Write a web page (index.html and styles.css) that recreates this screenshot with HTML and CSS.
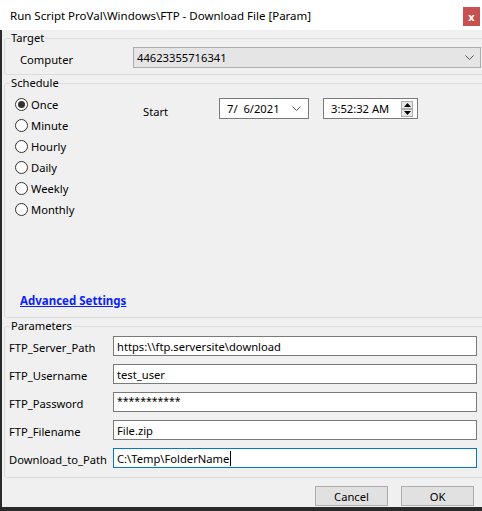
FILE: index.html
```html
<!DOCTYPE html>
<html>
<head>
<meta charset="utf-8">
<link rel="stylesheet" href="styles.css">
</head>
<body>
<div class="titlebar">
  <span class="title">Run Script ProVal\Windows\FTP - Download File [Param]</span>
  <span class="close">x</span>
</div>
<div class="window">
  <fieldset class="group group-target">
    <legend>Target</legend>
    <div class="row-computer">
      <span class="lbl-computer">Computer</span>
      <div class="combo">
        <span>44623355716341</span>
        <svg class="chev" width="9" height="5" viewBox="0 0 9 5"><path d="M0.5 0.5 L4.5 4.5 L8.5 0.5" fill="none" stroke="#555" stroke-width="1"/></svg>
      </div>
    </div>
  </fieldset>
  <fieldset class="group group-schedule">
    <legend>Schedule</legend>
    <div class="sched">
      <div class="radios">
        <div class="radio"><span class="circle checked"></span>Once</div>
        <div class="radio"><span class="circle"></span>Minute</div>
        <div class="radio"><span class="circle"></span>Hourly</div>
        <div class="radio"><span class="circle"></span>Daily</div>
        <div class="radio"><span class="circle"></span>Weekly</div>
        <div class="radio"><span class="circle"></span>Monthly</div>
      </div>
      <span class="start">Start</span>
      <div class="datebox">
        <span>7/&nbsp;&nbsp;6/2021</span>
        <svg class="chev" width="9" height="5" viewBox="0 0 9 5"><path d="M0.5 0.5 L4.5 4.5 L8.5 0.5" fill="none" stroke="#555" stroke-width="1"/></svg>
      </div>
      <div class="timebox">
        <span>3:52:32 AM</span>
        <div class="spin">
          <div class="spin-btn"><svg width="7" height="4" viewBox="0 0 7 4"><path d="M0 4 L3.5 0 L7 4 Z" fill="#000"/></svg></div>
          <div class="spin-btn"><svg width="7" height="4" viewBox="0 0 7 4"><path d="M0 0 L3.5 4 L7 0 Z" fill="#000"/></svg></div>
        </div>
      </div>
    </div>
    <a class="adv" href="#">Advanced Settings</a>
  </fieldset>
  <fieldset class="group group-params">
    <legend>Parameters</legend>
    <div class="params">
      <span class="plbl">FTP_Server_Path</span><div class="pin">https:\\ftp.serversite\download</div>
      <span class="plbl">FTP_Username</span><div class="pin">test_user</div>
      <span class="plbl">FTP_Password</span><div class="pin pw">***********</div>
      <span class="plbl">FTP_Filename</span><div class="pin">File.zip</div>
      <span class="plbl">Download_to_Path</span><div class="pin focus">C:\Temp\FolderName<span class="caret"></span></div>
    </div>
  </fieldset>
  <div class="buttons">
    <div class="btn">Cancel</div>
    <div class="btn">OK</div>
  </div>
</div>
</body>
</html>
```
FILE: styles.css
```css
* { box-sizing: border-box; }
html, body { margin: 0; padding: 0; }
body {
  width: 482px;
  height: 511px;
  overflow: hidden;
  font-family: "Noto Sans", "Open Sans", sans-serif;
  font-size: 11.2px;
  color: #000;
  background: #f0f0f0;
}
.titlebar {
  height: 30px;
  background: #fff;
  display: flex;
  align-items: center;
  justify-content: space-between;
  padding-left: 10px;
  padding-right: 2px;
}
.title { font-size: 11.5px; }
.close {
  width: 17px;
  height: 19px;
  background: #c75050;
  color: #fff;
  font-size: 11px;
  font-weight: bold;
  display: flex;
  align-items: center;
  justify-content: center;
  margin-top: 3px;
}
.window {
  height: 481px;
  border-left: 2px solid #2a2a2a;
  border-bottom: 4px solid #2a2a2a;
  display: flex;
  flex-direction: column;
}
.group {
  margin: 0 -4px 0 2px;
  padding: 0;
  border: 1px solid #dcdcdc;
  border-radius: 3px;
  min-inline-size: 0;
}
.group legend {
  margin-left: 5px;
  padding: 0 1px;
  line-height: 16px;
  height: 16px;
}
.group-target { height: 45px; }
.row-computer {
  display: flex;
  align-items: center;
  margin-top: 1px;
}
.lbl-computer { width: 128px; padding-left: 15px; padding-top: 4px; }
.combo {
  width: 348px;
  height: 21px;
  background: #e5e5e5;
  border: 1px solid #adadad;
  display: flex;
  align-items: center;
  justify-content: space-between;
  padding: 0 6px 0 3px;
}
.group-schedule { height: 243px; }
.sched {
  display: flex;
  align-items: flex-start;
}
.radios {
  display: flex;
  flex-direction: column;
  padding-left: 10px;
  padding-top: 3px;
  width: 138px;
}
.radio {
  height: 21px;
  display: flex;
  align-items: center;
}
.circle {
  width: 13px;
  height: 13px;
  border: 1px solid #333;
  border-radius: 50%;
  background: #fff;
  margin-right: 3px;
  display: flex;
  align-items: center;
  justify-content: center;
}
.circle.checked::after {
  content: "";
  width: 7px;
  height: 7px;
  border-radius: 50%;
  background: #333;
}
.start { width: 76px; margin-top: 13px; }
.datebox {
  width: 90px;
  height: 21px;
  margin-top: 7px;
  background: #fff;
  border: 1px solid #7a7a7a;
  display: flex;
  align-items: center;
  justify-content: space-between;
  padding: 0 7px 0 7px;
}
.timebox {
  width: 95px;
  height: 21px;
  margin-top: 7px;
  margin-left: 14px;
  background: #fff;
  border: 1px solid #7a7a7a;
  display: flex;
  align-items: center;
  justify-content: space-between;
  padding: 0 4px 0 7px;
}
.spin { display: flex; flex-direction: column; gap: 0; }
.spin-btn {
  width: 12px;
  height: 8px;
  border: 1px solid #adadad;
  background: #e8e8e8;
  display: flex;
  align-items: center;
  justify-content: center;
}
.adv {
  display: block;
  margin: 73px 0 0 15px;
  color: #0b1ffa;
  font-weight: bold;
  font-size: 11.5px;
  text-decoration: underline;
  width: max-content;
}
.group-params { height: 160px; }
.params {
  display: grid;
  grid-template-columns: 104px 364px;
  grid-auto-rows: 20px;
  row-gap: 8px;
  padding-left: 4px;
  padding-top: 2px;
  align-items: center;
}
.plbl { padding-top: 3px; }
.pin {
  height: 20px;
  background: #fff;
  border: 1px solid #7a7a7a;
  padding: 0 3px;
  display: flex;
  align-items: center;
}
.pin.pw { font-size: 10.5px; align-items: flex-start; padding-top: 1px; }
.pin.focus { border-color: #0078d7; }
.caret {
  display: inline-block;
  width: 1px;
  height: 15px;
  background: #000;
  margin-left: 1px;
}
.buttons {
  display: flex;
  justify-content: flex-end;
  gap: 13px;
  padding: 8px 8px 0 0;
}
.btn {
  width: 73px;
  height: 20px;
  background: #e1e1e1;
  border: 1px solid #adadad;
  display: flex;
  align-items: center;
  justify-content: center;
}
```
